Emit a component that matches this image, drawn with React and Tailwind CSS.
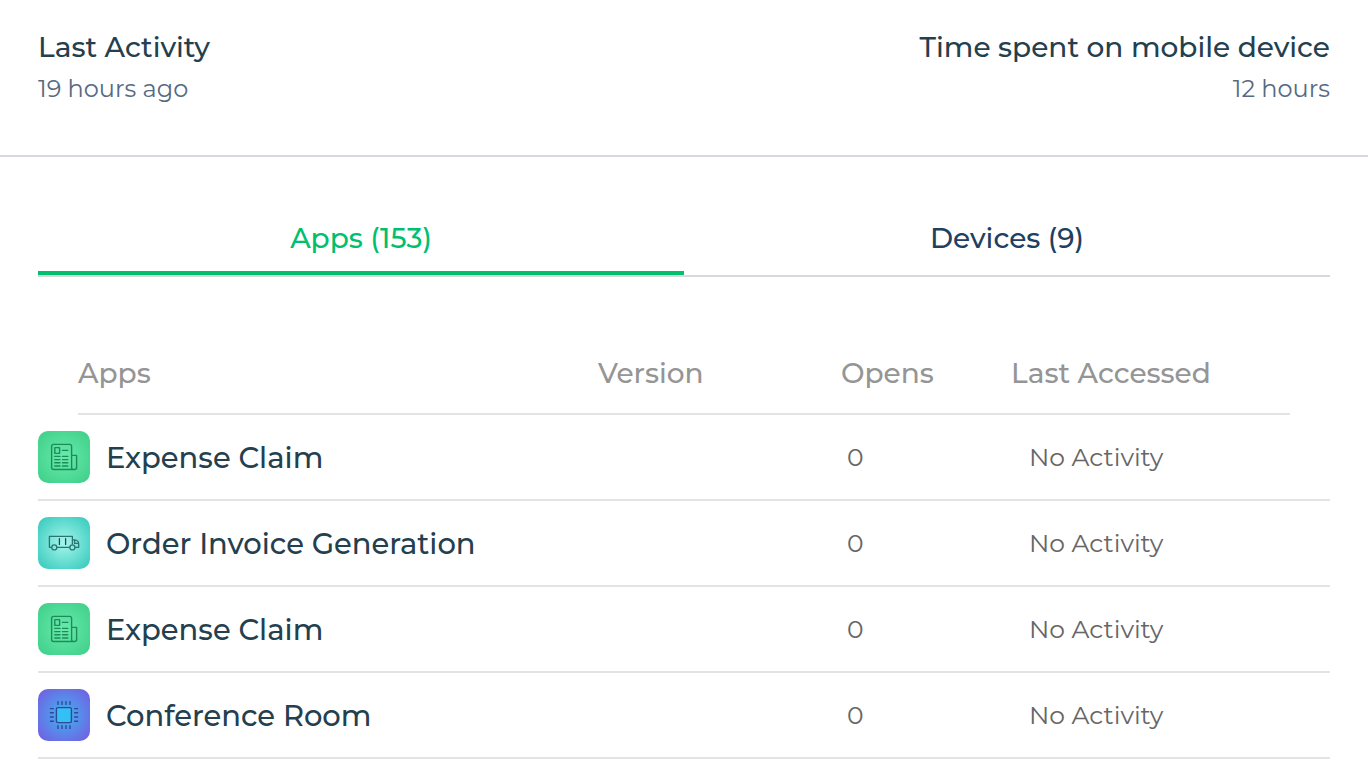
import { useState } from "react";

const rows = [
  { name: "Expense Claim", icon: "news", opens: 0, accessed: "No Activity" },
  { name: "Order Invoice Generation", icon: "truck", opens: 0, accessed: "No Activity" },
  { name: "Expense Claim", icon: "news", opens: 0, accessed: "No Activity" },
  { name: "Conference Room", icon: "chip", opens: 0, accessed: "No Activity" },
];

function NewsIcon() {
  return (
    <svg viewBox="0 0 52 52" className="size-full" fill="none" stroke="#1f8a5a" strokeWidth="1.4" strokeLinecap="round" strokeLinejoin="round" aria-hidden="true">
      <path d="M36.5 38.5H15.6a2 2 0 0 1-2-2V15.4a2 2 0 0 1 2-2h16a2 2 0 0 1 2 2v21.1a2 2 0 0 0 2 2h1a2 2 0 0 0 2-2V24.4h-5" />
      <rect x="16.8" y="16.6" width="4.8" height="5.8" rx="0.5" />
      <path d="M24.5 19.4h5.3M16.8 25.4h5.2M24.5 25.4h5.3M16.8 28.6h5.2M24.5 28.6h5.3M16.8 31.8h5.2M24.5 31.8h5.3M16.8 35h5.2M24.5 35h5.3" />
    </svg>
  );
}

function TruckIcon() {
  return (
    <svg viewBox="0 0 52 52" className="size-full" fill="none" stroke="#2b7475" strokeWidth="1.3" strokeLinecap="round" strokeLinejoin="round" aria-hidden="true">
      <path d="M13.4 30.3h-2V19.4h23v7.8M19.2 30.3h12.2M34.4 22.8h2.4c2.6 0 3.9 2.2 3.9 4.2v3.3h-3.4M36.6 23v3.4h3.8" />
      <path d="M21.4 21.6v5.8M27.6 21.6v5.8" stroke="#174f55" />
      <circle cx="16.3" cy="30.4" r="2.5" />
      <circle cx="34.4" cy="30.4" r="2.5" />
    </svg>
  );
}

function ChipIcon() {
  return (
    <svg viewBox="0 0 52 52" className="size-full" fill="none" stroke="#2b4b92" strokeWidth="1.4" strokeLinecap="round" strokeLinejoin="round" aria-hidden="true">
      <rect x="18.4" y="18.6" width="15" height="15" rx="1.5" fill="#35bff7" />
      <path d="M20 12.6v2.8M24 12.6v2.8M28 12.6v2.8M32 12.6v2.8M20 36.8v2.6M24 36.8v2.6M28 36.8v2.6M32 36.8v2.6M12.4 19.6h3M12.4 23.8h3M12.4 28h3M12.4 32.2h3M36.6 19.6h3M36.6 23.8h3M36.6 28h3M36.6 32.2h3" />
    </svg>
  );
}

const icons = {
  news: { Icon: NewsIcon, bg: "bg-[radial-gradient(circle,#68ebab_0%,#3dce88_100%)]" },
  truck: { Icon: TruckIcon, bg: "bg-[radial-gradient(circle,#a6f6ea_0%,#30c7bc_100%)]" },
  chip: { Icon: ChipIcon, bg: "bg-[radial-gradient(circle,#3fb4f4_0%,#7659df_100%)]" },
};

function Stat({ label, value, end }) {
  return (
    <div className={end ? "text-right" : "text-left"}>
      <dt className="text-[28px] leading-[42px] font-medium text-[#24404f]">{label}</dt>
      <dd className="text-2xl leading-[42px] text-[#566a82]">{value}</dd>
    </div>
  );
}

function Tab({ active, onClick, children }) {
  return (
    <button
      type="button"
      role="tab"
      aria-selected={active}
      onClick={onClick}
      className={
        active
          ? "flex-1 cursor-pointer border-b-4 border-[#00bf6f] py-3 text-[28px] leading-[42px] font-medium text-[#00bf6f]"
          : "flex-1 cursor-pointer border-b-4 border-transparent py-3 text-[28px] leading-[42px] font-medium text-[#213f60]"
      }
    >
      {children}
    </button>
  );
}

export default function App() {
  const [tab, setTab] = useState("apps");
  const head = "border-b-2 border-[#e3e3e3] pb-[22px] text-left text-[28px] leading-[36px] font-medium text-[#959595]";
  const cell = "border-b-2 border-[#e3e3e3] py-4 text-left";
  return (
    <main className="bg-white font-['Montserrat','Inter',sans-serif]">
      <dl className="flex justify-between border-b-2 border-[#d5d9dd] px-[38px] pt-[26px] pb-[45px]">
        <Stat label="Last Activity" value="19 hours ago" />
        <Stat label="Time spent on mobile device" value="12 hours" end />
      </dl>
      <section className="px-[38px] pt-12">
        <div role="tablist" className="flex border-b-2 border-[#d5d9dd]">
          <Tab active={tab === "apps"} onClick={() => setTab("apps")}>Apps (153)</Tab>
          <Tab active={tab === "devices"} onClick={() => setTab("devices")}>Devices (9)</Tab>
        </div>
        <table className="mt-[78px] w-full table-fixed border-separate border-spacing-0">
          <colgroup>
            <col />
            <col className="w-[243px]" />
            <col className="w-[170px]" />
            <col className="w-[319px]" />
          </colgroup>
          <thead>
            <tr>
              <th scope="col" className="p-0 pl-10"><div className={head}>Apps</div></th>
              <th scope="col" className="p-0"><div className={head}>Version</div></th>
              <th scope="col" className="p-0"><div className={head}>Opens</div></th>
              <th scope="col" className="p-0 pr-10"><div className={head}>Last Accessed</div></th>
            </tr>
          </thead>
          <tbody>
            {rows.map((row, i) => {
              const { Icon, bg } = icons[row.icon];
              return (
                <tr key={i}>
                  <td className={cell}>
                    <div className="flex items-center gap-4">
                      <span className={`size-[52px] shrink-0 overflow-hidden rounded-[10px] ${bg}`}><Icon /></span>
                      <span className="text-[29px] leading-[43px] font-medium whitespace-nowrap text-[#24404f]">{row.name}</span>
                    </div>
                  </td>
                  <td className={cell}></td>
                  <td className={`${cell} pl-1.5 text-[25px] leading-[31px] text-[#666]`}>{row.opens}</td>
                  <td className={`${cell} pl-[18px] text-[25px] leading-[31px] text-[#666]`}>{row.accessed}</td>
                </tr>
              );
            })}
          </tbody>
        </table>
      </section>
    </main>
  );
}
